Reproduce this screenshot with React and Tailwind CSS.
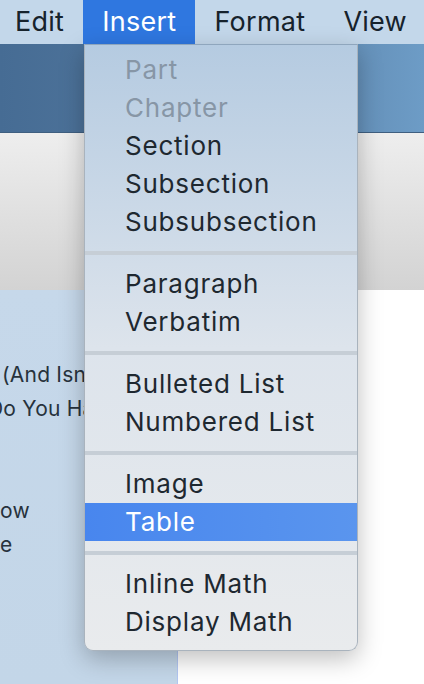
import React from 'react'

const groups = [
  [
    { label: 'Part', disabled: true },
    { label: 'Chapter', disabled: true },
    { label: 'Section' },
    { label: 'Subsection' },
    { label: 'Subsubsection' },
  ],
  [{ label: 'Paragraph' }, { label: 'Verbatim' }],
  [{ label: 'Bulleted List' }, { label: 'Numbered List' }],
  [{ label: 'Image' }, { label: 'Table', active: true }],
  [{ label: 'Inline Math' }, { label: 'Display Math' }],
]

function MenuItem({ item }) {
  let cls = 'text-[#1e2830]'
  if (item.disabled) cls = 'text-[#8796a6]'
  if (item.active) cls = 'text-white bg-gradient-to-r from-[#4886ee] to-[#5a95ee]'
  return (
    <div className={`h-[38px] flex items-center pl-[40px] text-[26px] tracking-[0.03em] leading-none whitespace-nowrap ${cls}`}>
      {item.label}
    </div>
  )
}

function InsertMenu() {
  return (
    <div className="absolute left-[84px] top-[44px] w-[274px] pt-[6px] pb-[9px] rounded-b-[9px] bg-gradient-to-b from-[#b5cbe1] via-[#dde4ec] to-[#e9ebed] shadow-[0_8px_24px_rgba(0,0,0,0.25)] border border-t-[#8fa6bd] border-[#a9b3bd]">
      {groups.map((group, gi) => (
        <div key={gi}>
          {gi > 0 && <div className="my-[10px] h-[4px] bg-[#c6ced6]" />}
          {group.map((item) => (
            <MenuItem key={item.label} item={item} />
          ))}
        </div>
      ))}
    </div>
  )
}

export default function App() {
  return (
    <div
      className="relative w-[424px] h-[684px] overflow-hidden flex flex-col bg-white"
      style={{ fontFamily: 'Inter, "Noto Sans", sans-serif' }}
    >
      {/* Menu bar */}
      <div className="h-[44px] bg-[#c3d7ea] flex items-stretch text-[27px] tracking-[0.01em] text-[#16222c] -ml-[4px]">
        <div className="pl-[19px] pr-[19px] flex items-center">Edit</div>
        <div className="px-[19px] flex items-center bg-[#2f77e0] text-white">Insert</div>
        <div className="px-[19px] flex items-center">Format</div>
        <div className="px-[19px] flex items-center">View</div>
      </div>

      {/* Desktop band */}
      <div className="h-[89px] bg-gradient-to-r from-[#466c94] via-[#54799f] to-[#6d9cc6] border-b border-[#3f5f80]" />

      {/* Toolbar area */}
      <div className="h-[157px] bg-gradient-to-b from-[#eeeeee] to-[#d3d3d3]" />

      {/* Content */}
      <div className="flex-1 flex">
        <div className="w-[178px] bg-gradient-to-b from-[#c6d8ea] to-[#c3d6e8] border-r border-[#b2c6f2] overflow-hidden text-[21px] tracking-[0.01em] text-[#27323c] pt-[68px]">
          <div className="whitespace-nowrap ml-[2px] h-[34px] leading-[34px]">(And Isn't)</div>
          <div className="whitespace-nowrap -ml-[12px] h-[34px] leading-[34px]">Do You Have</div>
          <div className="h-[68px]" />
          <div className="whitespace-nowrap ml-[0px] h-[34px] leading-[34px]">ow</div>
          <div className="whitespace-nowrap ml-[0px] h-[34px] leading-[34px]">e</div>
        </div>
        <div className="flex-1 bg-white" />
      </div>

      <InsertMenu />
    </div>
  )
}
